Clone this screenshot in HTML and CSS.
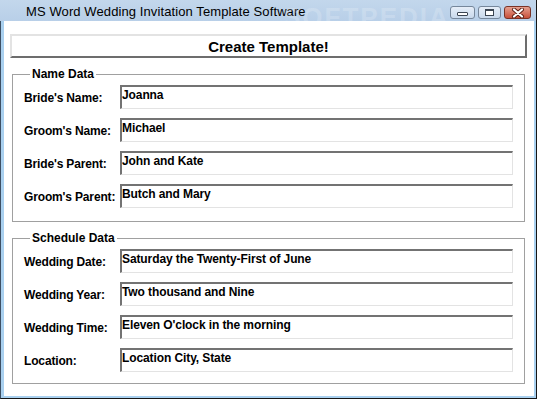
FILE: index.html
```html
<!DOCTYPE html>
<html lang="en">

<head>
    <meta charset="UTF-8">
    <title>MS Word Wedding Invitation Template Software</title>
    <link rel="stylesheet" href="styles.css">
</head>

<body>
    <div class="window">
        <div class="titlebar">
            <span class="title">MS Word Wedding Invitation Template Software</span>
            <span class="watermark">SOFTPEDIA<sup>™</sup></span>
            <div class="controls">
                <a href="#" class="ctl min"><i></i></a>
                <a href="#" class="ctl max"><i></i></a>
                <a href="#" class="ctl close">
                    <svg width="14" height="10" viewBox="0 0 14 10">
                        <path d="M3 1.5 L11 8.5 M11 1.5 L3 8.5" stroke="#5a1e14" stroke-width="4" stroke-linecap="round" />
                        <path d="M3 1.5 L11 8.5 M11 1.5 L3 8.5" stroke="#fff" stroke-width="2.2" stroke-linecap="round" />
                    </svg>
                </a>
            </div>
        </div>
        <div class="client">
            <button class="create">Create Template!</button>

            <fieldset class="group first">
                <legend>Name Data</legend>
                <div class="rows">
                    <div class="row"><label>Bride's Name:</label><input type="text" value="Joanna"></div>
                    <div class="row"><label>Groom's Name:</label><input type="text" value="Michael"></div>
                    <div class="row"><label>Bride's Parent:</label><input type="text" value="John and Kate"></div>
                    <div class="row"><label>Groom's Parent:</label><input type="text" value="Butch and Mary"></div>
                </div>
            </fieldset>

            <fieldset class="group second">
                <legend>Schedule Data</legend>
                <div class="rows">
                    <div class="row"><label>Wedding Date:</label><input type="text" value="Saturday the Twenty-First of June"></div>
                    <div class="row"><label>Wedding Year:</label><input type="text" value="Two thousand and Nine"></div>
                    <div class="row"><label>Wedding Time:</label><input type="text" value="Eleven O'clock in the morning"></div>
                    <div class="row"><label>Location:</label><input type="text" value="Location City, State"></div>
                </div>
            </fieldset>
        </div>
    </div>
</body>

</html>
```

FILE: styles.css
```css
/* reset */
* {
    margin: 0;
    padding: 0;
    box-sizing: border-box;
}

body {
    font-family: "Liberation Sans", Arial, sans-serif;
    background: #fff;
}

a {
    text-decoration: none;
    color: #000;
}

.window {
    position: relative;
    display: flex;
    flex-direction: column;
    width: 537px;
    height: 399px;
    background: #a9d0ef;
    border-left: 1px solid #3d4f63;
    border-right: 1px solid #151515;
    border-bottom: 1px solid #151515;
}

.titlebar {
    display: flex;
    align-items: flex-start;
    height: 21px;
    margin-left: -1px;
    background: linear-gradient(to bottom, #c3d7ec, #b8cfe8);
}

.title {
    padding: 4px 0 0 26px;
    font-size: 13px;
    line-height: 16px;
    color: #000;
    letter-spacing: 0.1px;
}

.watermark {
    position: absolute;
    left: 282px;
    top: 2px;
    font-size: 26px;
    font-weight: bold;
    letter-spacing: 2px;
    color: rgba(255, 255, 255, .2);
    pointer-events: none;
}

.watermark sup {
    font-size: 8px;
    vertical-align: top;
}

.controls {
    display: flex;
    gap: 3px;
    margin: 6px 5px 0 auto;
}

.ctl {
    display: flex;
    align-items: center;
    justify-content: center;
    height: 13px;
    border: 1px solid #76879b;
    border-radius: 3px;
    background: linear-gradient(to bottom, #e6eef8, #c9d9ec);
}

.ctl.min {
    width: 25px;
}

.ctl.max {
    width: 23px;
}

.ctl.close {
    width: 27px;
    border-color: #7a3326;
    background: linear-gradient(to bottom, #e5a08f, #c9503a);
}

.ctl.min i {
    display: block;
    width: 11px;
    height: 4px;
    margin-top: 3px;
    border: 1px solid #3b4552;
    border-radius: 1px;
    background: #fff;
}

.ctl.max i {
    display: block;
    width: 9px;
    height: 7px;
    border: 1px solid #3b4552;
    border-top-width: 2px;
    background: #fff;
}

.client {
    flex: 1;
    display: flex;
    flex-direction: column;
    margin: 0 2px 2px 3px;
    padding: 13px 9px 0 8px;
    background: #fff;
}

.create {
    height: 24px;
    margin: 0 -2px;
    font-family: "Liberation Sans", Arial, sans-serif;
    font-size: 15px;
    font-weight: bold;
    color: #000;
    background: #fff;
    border: 2px solid;
    border-color: #e3e3e3 #6d6d6d #6d6d6d #e3e3e3;
}

.group {
    margin-top: 9px;
    padding: 4px 11px 13px 11px;
    border: 1px solid #a0a0a0;
}

.group.second {
    padding-bottom: 11px;
}

.group legend {
    margin-left: 6px;
    padding: 0 2px;
    font-size: 12px;
    line-height: 14px;
    font-weight: bold;
}

.rows {
    display: flex;
    flex-direction: column;
    gap: 9px;
}

.row {
    display: flex;
    align-items: center;
    height: 24px;
}

.row label {
    width: 96px;
    font-size: 12px;
    line-height: 14px;
    font-weight: bold;
    letter-spacing: -0.15px;
    margin-top: 2px;
}

.row input {
    flex: 1;
    height: 24px;
    padding: 1px 0 6px 0;
    font-family: "Liberation Sans", Arial, sans-serif;
    font-size: 12px;
    line-height: 14px;
    font-weight: bold;
    letter-spacing: -0.1px;
    color: #000;
    background: #fff;
    border-style: solid;
    border-width: 2px 1px 1px 2px;
    border-color: #737373 #e3e3e3 #e3e3e3 #737373;
    outline: none;
}
```
